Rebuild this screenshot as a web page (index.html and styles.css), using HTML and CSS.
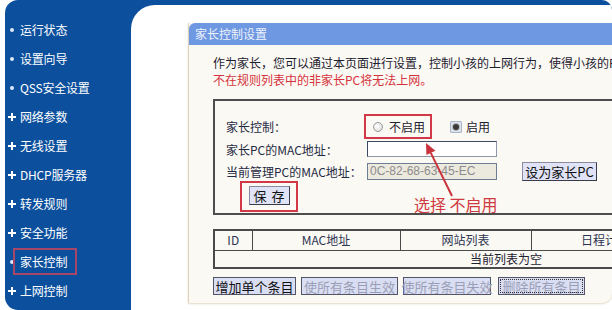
FILE: index.html
```html
<!DOCTYPE html>
<html lang="zh-CN">
<head>
<meta charset="utf-8">
<title>家长控制设置</title>
<link rel="stylesheet" href="styles.css">
</head>
<body>
<div class="frame">
  <nav class="side">
    <div class="item"><span class="dot"></span><span class="lbl">运行状态</span></div>
    <div class="item"><span class="dot"></span><span class="lbl">设置向导</span></div>
    <div class="item"><span class="dot"></span><span class="lbl">QSS安全设置</span></div>
    <div class="item"><span class="plus"></span><span class="lbl">网络参数</span></div>
    <div class="item"><span class="plus"></span><span class="lbl">无线设置</span></div>
    <div class="item"><span class="plus"></span><span class="lbl">DHCP服务器</span></div>
    <div class="item"><span class="plus"></span><span class="lbl">转发规则</span></div>
    <div class="item"><span class="plus"></span><span class="lbl">安全功能</span></div>
    <div class="item"><span class="dot"></span><span class="lbl sel">家长控制</span></div>
    <div class="item"><span class="plus"></span><span class="lbl">上网控制</span></div>
  </nav>
  <main class="main">
    <section class="panel">
      <div class="ptitle">家长控制设置</div>
      <div class="pbody">
        <p class="intro">作为家长，您可以通过本页面进行设置，控制小孩的上网行为，使得小孩的PC只能在指定的时间访问指定的网站。</p>
        <p class="intro warn">不在规则列表中的非家长PC将无法上网。</p>
        <div class="box">
          <div class="row r1">
            <span class="label">家长控制：</span>
            <span class="opt hl"><i class="radio"></i>不启用</span>
            <span class="opt second"><i class="radio on"></i>启用</span>
          </div>
          <div class="row r2">
            <span class="label">家长PC的MAC地址：</span>
            <span class="input"></span>
          </div>
          <div class="row r3">
            <span class="label">当前管理PC的MAC地址：</span>
            <span class="input dis">0C-82-68-63-45-EC</span>
            <span class="btn setpc">设为家长PC</span>
          </div>
          <div class="saverow">
            <span class="hlbox"><span class="btn save">保 存</span></span>
          </div>
        </div>
        <table class="list">
          <tr class="head">
            <th class="c1">ID</th>
            <th class="c2">MAC地址</th>
            <th class="c3">网站列表</th>
            <th class="c4">日程计划</th>
            <th class="c5">状态</th>
            <th class="c6">编辑</th>
          </tr>
          <tr class="empty"><td colspan="6">当前列表为空</td></tr>
        </table>
        <div class="actions">
          <span class="btn act a1">增加单个条目</span>
          <span class="btn act a2 off">使所有条目生效</span>
          <span class="btn act a3 off">使所有条目失效</span>
          <span class="btn act a4 off focus">删除所有条目</span>
        </div>
      </div>
      <svg class="arrow" width="40" height="64" viewBox="0 0 40 64">
        <line x1="13.8" y1="17.9" x2="35" y2="61" stroke="#c9343c" stroke-width="2"/>
        <polygon points="9,8 18.4,15.7 9.4,20.1" fill="#c9343c"/>
      </svg>
      <span class="note">选择 不启用</span>
    </section>
  </main>
</div>
</body>
</html>
```
FILE: styles.css
```css
* { box-sizing: border-box; }
html, body { margin: 0; padding: 0; }
body {
  width: 612px;
  height: 310px;
  overflow: hidden;
  background: #ffffff;
  font-family: "Noto Sans CJK SC", "Liberation Sans", sans-serif;
  font-size: 12px;
}
.frame {
  margin-left: 5px;
  width: 607px;
  height: 310px;
  background: #0b4f9d;
  border-radius: 13px 10px 0 13px;
  display: flex;
  overflow: hidden;
}
.side {
  width: 126px;
  flex: none;
  padding-top: 15px;
  padding-left: 2px;
}
.item {
  height: 29px;
  display: flex;
  align-items: center;
  color: #ffffff;
}
.dot, .plus {
  width: 13px;
  height: 10px;
  flex: none;
  position: relative;
}
.dot::after {
  content: "";
  position: absolute;
  left: 3px;
  top: 3px;
  width: 4px;
  height: 4px;
  border-radius: 50%;
  background: #dfe8f6;
}
.plus::before, .plus::after {
  content: "";
  position: absolute;
  background: #ffffff;
}
.plus::before { left: 1px; top: 4px; width: 8px; height: 2px; }
.plus::after { left: 4px; top: 1px; width: 2px; height: 8px; }
.lbl {
  line-height: 16px;
  letter-spacing: -0.2px;
  white-space: nowrap;
}
.sel {
  margin-left: -7px;
  height: 27px;
  line-height: 23px;
  padding: 0 8px 0 5px;
  border: 2px solid #a8466a;
  background: #0b4f9d;
  position: relative;
}
.main {
  flex: 1;
  min-width: 0;
  margin-top: 5px;
  background: #ffffff;
  border-top-left-radius: 24px;
  padding-left: 57px;
  padding-top: 18px;
}
.panel {
  position: relative;
  height: 280px;
  background: #fbf9f3;
  border-left: 1px solid #ddd3ba;
  border-bottom-right-radius: 10px;
  box-shadow: 0 1px 2px rgba(190, 170, 120, 0.45);
  overflow: hidden;
}
.ptitle {
  height: 22px;
  line-height: 22px;
  padding-left: 6px;
  background: #6e98e1;
  color: #eef3fc;
  border-top-left-radius: 6px;
  font-size: 12px;
}
.pbody {
  padding-left: 24px;
  padding-top: 9px;
  width: 700px;
}
.intro {
  margin: 0;
  line-height: 17px;
  color: #1d2130;
  white-space: nowrap;
}
.warn { color: #d5323c; }
.box {
  margin-top: 11px;
  width: 560px;
  border: 2px solid #4d4d4d;
  border-right: none;
  padding: 13px 0 1px 0;
}
.row {
  display: flex;
  align-items: center;
  padding-left: 11px;
}
.label {
  width: 141px;
  flex: none;
  color: #1f2a44;
  white-space: nowrap;
}
.r1 { height: 25px; }
.r2 { height: 16px; margin-top: 2px; }
.r3 { height: 17px; margin-top: 6px; }
.opt {
  display: flex;
  align-items: center;
  height: 25px;
  color: #1d2130;
}
.hl {
  margin-left: -3px;
  border: 2px solid #d23848;
  padding: 0 5px 0 7px;
}
.second { margin-left: 18px; }
.radio {
  display: inline-block;
  width: 10px;
  height: 10px;
  border-radius: 50%;
  border: 1px solid #9a9a9a;
  background: radial-gradient(circle at 40% 40%, #ffffff, #d6d6d6);
  margin-right: 6px;
  position: relative;
}
.radio.on {
  width: 12px;
  height: 12px;
  border-radius: 1px;
  border: 1px solid #a9b4c6;
  background: #dde5f0;
  margin-right: 4px;
}
.radio.on::after {
  content: "";
  position: absolute;
  left: 2px;
  top: 2px;
  width: 6px;
  height: 6px;
  border-radius: 50%;
  background: #3a3a3a;
  box-shadow: 0 0 0 1px #b8b8b8;
}
.input {
  display: block;
  width: 130px;
  height: 100%;
  background: #ffffff;
  border: 1px solid #3e4a62;
  border-right-color: #8d97a8;
  border-bottom-color: #8d97a8;
}
.input.dis {
  background: #ece9df;
  color: #8c8c8c;
  font-family: "Liberation Sans", sans-serif;
  font-size: 12px;
  line-height: 15px;
  padding-left: 2px;
  border-color: #6e7c94;
}
.btn {
  display: inline-flex;
  align-items: center;
  justify-content: center;
  background: #dfe3f5;
  border: 1px solid #3a3a4a;
  border-top-color: #8a8aa0;
  border-left-color: #8a8aa0;
  color: #111111;
  font-size: 13px;
  white-space: nowrap;
}
.setpc {
  margin-left: 25px;
  width: 75px;
  height: 19px;
  flex: none;
}
.saverow {
  margin-top: 1px;
  padding-left: 25px;
  height: 31px;
}
.hlbox {
  display: inline-block;
  border: 2px solid #d23848;
  padding: 3px 6px 5px 7px;
  height: 31px;
}
.save {
  width: 41px;
  height: 19px;
  letter-spacing: 1px;
}
.list {
  margin-top: 14px;
  width: 584px;
  border-collapse: collapse;
  border: 2px solid #4a4a4a;
  table-layout: fixed;
}
.list th, .list td {
  border: 1px solid #4a4a4a;
  padding: 0;
  font-weight: normal;
  color: #2c3452;
  text-align: center;
  font-size: 12px;
  line-height: 16px;
}
.head { height: 20px; }
.empty { height: 18px; }
.c1 { width: 38px; }
.c2 { width: 148px; }
.c3 { width: 131px; }
.c4 { width: 148px; }
.c5 { width: 60px; }
.c6 { width: 59px; }
.empty td { color: #1d2130; }
.actions {
  margin-top: 8px;
  display: flex;
  gap: 5px;
}
.act {
  height: 18px;
  font-size: 13px;
  border-color: #55556a;
  background: #dadef3;
}
.a1 { width: 83px; }
.a2 { width: 97px; }
.a3 { width: 88px; }
.a4 { width: 87px; margin-left: 2px; }
.off { color: #9a9eb6; }
.focus { outline: 1px dotted #333333; outline-offset: -3px; }
.arrow {
  position: absolute;
  left: 228px;
  top: 112px;
}
.note {
  position: absolute;
  left: 225px;
  top: 172px;
  font-size: 16px;
  line-height: 18px;
  color: #cf3a40;
  white-space: nowrap;
}
```
